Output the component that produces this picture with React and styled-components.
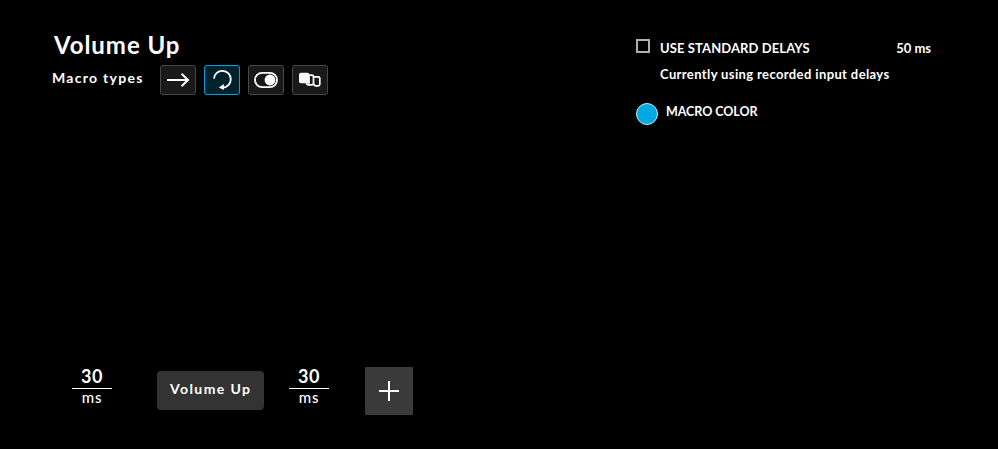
import React from 'react';
import styled, { createGlobalStyle } from 'styled-components';

const GlobalStyle = createGlobalStyle`
  * { box-sizing: border-box; }
  body {
    margin: 0;
    background: #000;
    color: #fff;
    font-family: Lato, "Open Sans", sans-serif;
  }
`;

const Page = styled.main`
  width: 998px;
  height: 449px;
  display: flex;
  flex-direction: column;
  justify-content: space-between;
  padding: 30px 67px 34px 52px;
  overflow: hidden;
`;

const Header = styled.header`
  display: flex;
  justify-content: space-between;
  align-items: flex-start;
`;

const Title = styled.h1`
  margin: 0;
  padding-left: 2px;
  font-size: 24px;
  line-height: 30px;
  font-weight: 700;
  letter-spacing: 0.95px;
  white-space: nowrap;
`;

const TypeRow = styled.div`
  display: flex;
  align-items: flex-start;
  margin-top: 5px;
`;

const TypeLabel = styled.span`
  width: 108px;
  line-height: 26px;
  font-size: 14px;
  font-weight: 700;
  letter-spacing: 1.28px;
  white-space: nowrap;
`;

const TypeList = styled.div`
  display: flex;
  gap: 8px;
`;

const TypeButton = styled.button`
  width: 36px;
  height: 30px;
  padding: 0;
  display: flex;
  color: #fff;
  background: ${(p) => (p.$active ? '#00222d' : '#191919')};
  border: 1px solid ${(p) => (p.$active ? '#00a3db' : '#484848')};
  border-radius: 3px;

  svg { display: block; }
`;

const Settings = styled.section`
  width: 295px;
  padding-top: 9px;
`;

const DelayRow = styled.div`
  display: flex;
  align-items: flex-start;
  height: 26px;
`;

const Checkbox = styled.span`
  width: 14px;
  height: 14px;
  margin-right: 10px;
  border: 2px solid #b0b0b0;
`;

const SettingText = styled.span`
  font-size: ${(p) => p.$size || 13}px;
  line-height: 18px;
  font-weight: 700;
  letter-spacing: ${(p) => p.$spacing || 0}px;
  white-space: nowrap;
`;

const DelayValue = styled(SettingText)`
  margin-left: auto;
`;

const DelayNote = styled.div`
  display: flex;
  height: 38px;
  padding-left: 24px;
`;

const ColorRow = styled.div`
  display: flex;
  gap: 8px;
`;

const Swatch = styled.span`
  width: 22px;
  height: 22px;
  border-radius: 50%;
  border: 1px solid #c8ebf7;
  background: #00a9e0;
`;

const Timeline = styled.section`
  display: flex;
  align-items: flex-start;
  padding-left: 20px;
`;

const Delay = styled.div`
  width: 40px;
  text-align: center;
`;

const DelayNumber = styled.div`
  height: 22px;
  line-height: 18px;
  font-size: 18px;
  font-weight: 700;
  letter-spacing: 0.5px;
  border-bottom: 1px solid #fff;
`;

const DelayUnit = styled.div`
  line-height: 16px;
  font-size: 15px;
  font-weight: 500;
  letter-spacing: 0.9px;
`;

const ActionBlock = styled.div`
  width: 107px;
  height: 39px;
  margin: 4px 25px 0 45px;
  padding-left: 13px;
  border-radius: 4px;
  background: #333;
  font-size: 14px;
  line-height: 36px;
  font-weight: 700;
  letter-spacing: 1.4px;
  white-space: nowrap;
`;

const AddButton = styled.button`
  width: 48px;
  height: 48px;
  margin-left: 36px;
  padding: 0;
  border: 0;
  border-radius: 1px;
  background: #3a3a3a;
  color: #fff;

  svg { display: block; }
`;

const Icon = ({ children }) => (
  <svg width="34" height="28" viewBox="0 0 34 28" fill="none" stroke="currentColor" strokeWidth="1.8">
    {children}
  </svg>
);

const macroTypes = [
  { name: 'No repeat', icon: <path d="M6 14H27M20.5 7.8L27 14L20.5 20.2" strokeWidth="2" /> },
  {
    name: 'Repeat while holding',
    active: true,
    icon: (
      <>
        <path d="M9 12.6A8.4 8.4 0 1 1 17.6 21.6" />
        <path d="M13.8 21.5L18.8 18V24Z" fill="currentColor" stroke="none" />
      </>
    ),
  },
  {
    name: 'Toggle',
    icon: (
      <>
        <rect x="6" y="6.9" width="22" height="14.2" rx="7.1" />
        <circle cx="21" cy="14" r="5.4" fill="currentColor" stroke="none" />
      </>
    ),
  },
  {
    name: 'Sequence',
    icon: (
      <>
        <rect x="6" y="6.7" width="10.4" height="10.6" rx="2" fill="currentColor" stroke="none" />
        <path d="M16 9.2H18.9Q20.5 9.2 20.5 10.8V17.3Q20.5 18.9 18.9 18.9H15.2Q13.6 18.9 13.6 17.3V16.5" strokeWidth="1.7" />
        <path d="M20.8 10.9H25.2Q26.8 10.9 26.8 12.5V18.3Q26.8 19.9 25.2 19.9H22.6Q21 19.9 21 18.3V17.5" strokeWidth="1.7" />
        <path d="M16 10V18" strokeWidth="1.5" />
      </>
    ),
  },
];

const DelayStep = () => (
  <Delay>
    <DelayNumber>30</DelayNumber>
    <DelayUnit>ms</DelayUnit>
  </Delay>
);

export default function App() {
  return (
    <>
      <GlobalStyle />
      <Page>
        <Header>
          <div>
            <Title>Volume Up</Title>
            <TypeRow>
              <TypeLabel>Macro types</TypeLabel>
              <TypeList>
                {macroTypes.map((type) => (
                  <TypeButton key={type.name} aria-label={type.name} $active={type.active}>
                    <Icon>{type.icon}</Icon>
                  </TypeButton>
                ))}
              </TypeList>
            </TypeRow>
          </div>
          <Settings>
            <DelayRow>
              <Checkbox role="checkbox" aria-checked="false" />
              <SettingText $spacing={0.1}>USE STANDARD DELAYS</SettingText>
              <DelayValue>50 ms</DelayValue>
            </DelayRow>
            <DelayNote>
              <SettingText $spacing={0.38}>Currently using recorded input delays</SettingText>
            </DelayNote>
            <ColorRow>
              <Swatch />
              <SettingText $size={12.5} $spacing={-0.05}>MACRO COLOR</SettingText>
            </ColorRow>
          </Settings>
        </Header>
        <Timeline>
          <DelayStep />
          <ActionBlock>Volume Up</ActionBlock>
          <DelayStep />
          <AddButton aria-label="Add action">
            <svg width="48" height="48" viewBox="0 0 48 48" stroke="currentColor" strokeWidth="2">
              <path d="M14 24H34M24 14V34" />
            </svg>
          </AddButton>
        </Timeline>
      </Page>
    </>
  );
}
